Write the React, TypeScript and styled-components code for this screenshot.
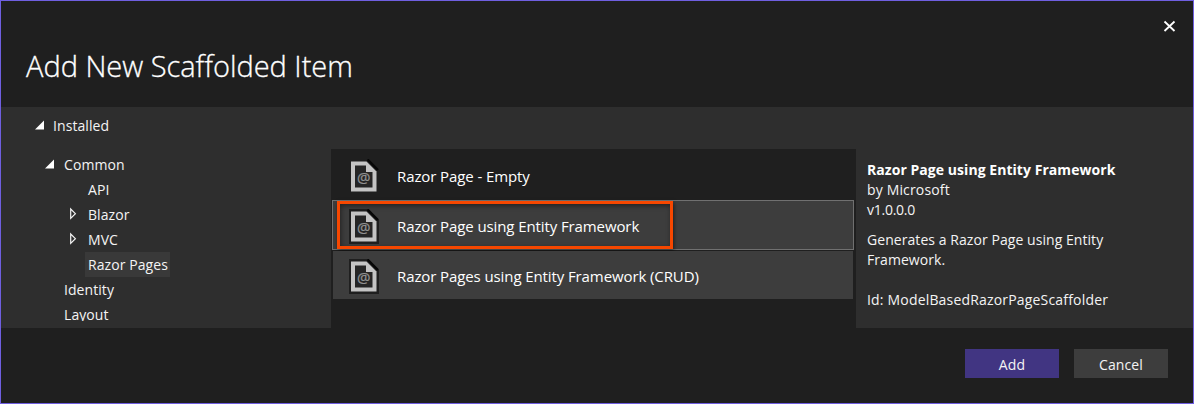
import React from "react";
import styled, { createGlobalStyle } from "styled-components";

const GlobalStyle = createGlobalStyle`
  * { box-sizing: border-box; }
  body {
    margin: 0;
    background: #1f1f1f;
    font-family: "Open Sans", "Noto Sans", sans-serif;
    font-size: 14px;
    color: #f4f4f4;
  }
`;

const Dialog = styled.div`
  width: 1194px;
  height: 404px;
  border: 1px solid #6f5fe0;
  background: #1f1f1f;
  display: flex;
  flex-direction: column;
  overflow: hidden;
`;

const Header = styled.header`
  height: 106px;
  flex: none;
  display: flex;
  justify-content: space-between;
  align-items: flex-start;
`;

const Title = styled.h1`
  margin: 42px 0 0 25px;
  font-size: 29px;
  line-height: 46px;
  font-weight: 300;
  color: #fff;
  white-space: nowrap;
  letter-spacing: -0.02px;
  -webkit-text-stroke: 0.3px #fff;
`;

const CloseButton = styled.button`
  margin: 19px 17px 0 0;
  padding: 0;
  width: 13px;
  height: 13px;
  border: 0;
  background: none;
  svg { display: block; }
`;

const Body = styled.main`
  height: 221px;
  flex: none;
  background: #2e2e2e;
  display: flex;
`;

const Tree = styled.nav`
  width: 330px;
  height: 214px;
  overflow: hidden;
`;

const TreeRow = styled.div<{ $indent: number; $root?: boolean }>`
  height: 25px;
  margin: ${(p) => (p.$root ? "6px 0 14px" : "0")};
  padding-left: ${(p) => p.$indent}px;
  display: flex;
  align-items: center;
`;

const Arrow = styled.span<{ $width: number }>`
  width: ${(p) => p.$width}px;
  height: 25px;
  flex: none;
  svg { display: block; }
`;

const TreeLabel = styled.span<{ $selected?: boolean }>`
  height: 25px;
  line-height: 25px;
  margin-left: -3px;
  padding: 0 2px 0 3px;
  white-space: nowrap;
  letter-spacing: 0.07px;
  background: ${(p) => (p.$selected ? "#393939" : "transparent")};
`;

const List = styled.section`
  width: 525px;
  margin-top: 42px;
  padding: 1px 2px 0 1px;
  background: #1f1f1f;
`;

const Item = styled.div<{ $tone: "plain" | "selected" | "raised" }>`
  position: relative;
  height: 50px;
  border: 1px solid ${(p) => (p.$tone === "selected" ? "#707070" : "transparent")};
  background: ${(p) => (p.$tone === "plain" ? "#1f1f1f" : "#3d3d3d")};
  background-clip: padding-box;
  display: flex;
  align-items: center;
  padding-left: 16px;
`;

const ItemLabel = styled.span`
  margin-left: 18px;
  padding-top: 1px;
  font-size: 15px;
  line-height: 20px;
  font-weight: 500;
  color: #fff;
  white-space: nowrap;
  letter-spacing: -0.1px;
`;

const Highlight = styled.div`
  position: absolute;
  left: 4px;
  top: 0;
  width: 336px;
  height: 48px;
  border: 3px solid #f64700;
  box-shadow: 1px 2px 4px rgba(0, 0, 0, 0.5), inset 1px 2px 5px rgba(0, 0, 0, 0.45);
`;

const Details = styled.aside`
  padding: 53px 0 0 11px;
  line-height: 20px;
`;

const Line = styled.div<{ $bold?: boolean; $gap?: number; $track?: number }>`
  margin-top: ${(p) => p.$gap ?? 0}px;
  font-weight: ${(p) => (p.$bold ? 700 : 400)};
  color: ${(p) => (p.$bold ? "#fff" : "#f4f4f4")};
  letter-spacing: ${(p) => p.$track ?? 0}px;
  white-space: nowrap;
`;

const Footer = styled.footer`
  flex: 1;
  display: flex;
  justify-content: flex-end;
  gap: 15px;
  padding: 21px 25px 0 0;
`;

const Button = styled.button<{ $primary?: boolean }>`
  width: 94px;
  height: 29px;
  padding: 2px 0 0;
  border: 0;
  font: inherit;
  letter-spacing: 0.1px;
  color: #f4f4f4;
  background: ${(p) => (p.$primary ? "#413582" : "#3d3d3d")};
`;

const IconFrame = styled.svg`
  display: block;
  flex: none;
  margin-top: 2px;
`;

const Expanded = ({ width }: { width: number }) => (
  <Arrow $width={width}>
    <svg width="10" height="25">
      <path d="M9 7.5V16.5H0Z" fill="#fff" />
    </svg>
  </Arrow>
);

const Collapsed = () => (
  <Arrow $width={19}>
    <svg width="10" height="25">
      <path d="M1.7 7V16.4L6.4 11.7Z" fill="none" stroke="#f4f4f4" strokeWidth="1.2" />
    </svg>
  </Arrow>
);

const RazorIcon = () => (
  <IconFrame width="30" height="35" viewBox="0 0 30 35">
    <path d="M0 0H19L30 11V35H0Z" fill="#1f1f1f" />
    <path d="M2 2.5H17.5L27.5 12.5V32.5H2Z" fill="#c4c4c4" />
    <path d="M6 6.5H17V13H23.5V28.5H6Z" fill="#252525" />
    <path d="M18.5 0.5L29 11" stroke="#060606" strokeWidth="2.4" />
    <text x="14.8" y="23.5" textAnchor="middle" fontSize="15" fontFamily="Open Sans, sans-serif" fill="#929292" stroke="#929292" strokeWidth="0.25">@</text>
  </IconFrame>
);

export default function App() {
  return (
    <>
      <GlobalStyle />
      <Dialog>
        <Header>
          <Title>Add New Scaffolded Item</Title>
          <CloseButton aria-label="Close">
            <svg width="13" height="13">
              <path d="M1.5 1.5L11.5 11M11.5 1.5L1.5 11" stroke="#fff" strokeWidth="1.8" />
            </svg>
          </CloseButton>
        </Header>
        <Body>
          <Tree>
            <TreeRow $indent={34} $root><Expanded width={18} /><TreeLabel>Installed</TreeLabel></TreeRow>
            <TreeRow $indent={44}><Expanded width={19} /><TreeLabel>Common</TreeLabel></TreeRow>
            <TreeRow $indent={87}><TreeLabel>API</TreeLabel></TreeRow>
            <TreeRow $indent={68}><Collapsed /><TreeLabel>Blazor</TreeLabel></TreeRow>
            <TreeRow $indent={68}><Collapsed /><TreeLabel>MVC</TreeLabel></TreeRow>
            <TreeRow $indent={87}><TreeLabel $selected>Razor Pages</TreeLabel></TreeRow>
            <TreeRow $indent={63}><TreeLabel>Identity</TreeLabel></TreeRow>
            <TreeRow $indent={63}><TreeLabel>Layout</TreeLabel></TreeRow>
          </Tree>
          <List>
            <Item $tone="plain"><RazorIcon /><ItemLabel>Razor Page - Empty</ItemLabel></Item>
            <Item $tone="selected">
              <RazorIcon /><ItemLabel>Razor Page using Entity Framework</ItemLabel>
              <Highlight />
            </Item>
            <Item $tone="raised"><RazorIcon /><ItemLabel>Razor Pages using Entity Framework (CRUD)</ItemLabel></Item>
          </List>
          <Details>
            <Line $bold $track={0.05}>Razor Page using Entity Framework</Line>
            <Line $track={0.15}>by Microsoft</Line>
            <Line $track={-0.25}>v1.0.0.0</Line>
            <Line $gap={10} $track={0.06}>Generates a Razor Page using Entity</Line>
            <Line $track={0.06}>Framework.</Line>
            <Line $gap={20} $track={0.18}>Id: ModelBasedRazorPageScaffolder</Line>
          </Details>
        </Body>
        <Footer>
          <Button $primary>Add</Button>
          <Button>Cancel</Button>
        </Footer>
      </Dialog>
    </>
  );
}
